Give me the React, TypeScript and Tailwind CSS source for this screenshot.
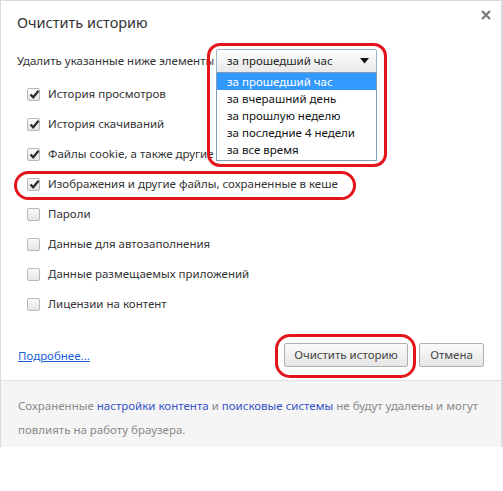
import React from "react";

const font = { fontFamily: '"Noto Sans", "Open Sans", sans-serif' };

function Check({ checked }: { checked: boolean }) {
  return (
    <div className="relative w-[13px] h-[13px] rounded-[2px] border border-[#b8b8b8] bg-gradient-to-b from-[#fbfbfb] to-[#e4e4e4] shrink-0">
      {checked && (
        <svg className="absolute left-[1px] top-[0px]" width="11" height="11" viewBox="0 0 11 11">
          <path d="M1.5 5.5 L4.2 8.3 L9.6 1.8" fill="none" stroke="#2a2a2a" strokeWidth="2.2" />
        </svg>
      )}
    </div>
  );
}

const rows: [string, boolean][] = [
  ["История просмотров", true],
  ["История скачиваний", true],
  ["Файлы cookie, а также другие данные сайтов и плагинов", true],
  ["Изображения и другие файлы, сохраненные в кеше", true],
  ["Пароли", false],
  ["Данные для автозаполнения", false],
  ["Данные размещаемых приложений", false],
  ["Лицензии на контент", false],
];

const options = [
  "за прошедший час",
  "за вчерашний день",
  "за прошлую неделю",
  "за последние 4 недели",
  "за все время",
];

export default function App() {
  return (
    <div className="relative w-[503px] h-[491px] bg-white overflow-hidden text-[#333]" style={font}>
      <div className="w-[503px] h-[447px] border-l border-r-2 border-t border-[#dadada] flex flex-col">
        <div className="h-[43px] flex items-center justify-between pl-[16px] pr-[10px]">
          <div className="text-[14.5px] text-[#333]">Очистить историю</div>
          <svg width="10" height="10" viewBox="0 0 10 10" className="mb-[16px]">
            <path d="M1 1 L9 9 M9 1 L1 9" stroke="#7a7a7a" strokeWidth="2.2" />
          </svg>
        </div>
        <div className="h-[35px] flex items-start pl-[16px] relative">
          <div className="text-[11.5px] mt-[8px] w-[199px] whitespace-nowrap">Удалить указанные ниже элементы</div>
          <div className="relative mt-[5px]">
            <div className="w-[161px] h-[24px] border border-[#9fb3cf] rounded-t-[2px] bg-gradient-to-b from-[#ffffff] to-[#e8e8e8] flex items-center pl-[10px] text-[11.5px] text-[#222]">
              за прошедший час
              <svg className="absolute right-[8px] top-[9px]" width="9" height="6" viewBox="0 0 9 6">
                <path d="M0 0 L9 0 L4.5 5.5 Z" fill="#111" />
              </svg>
            </div>
            <div className="absolute left-0 top-[23px] w-[161px] border border-[#7f9db9] bg-white z-10 pb-[2px]">
              {options.map((o, i) => (
                <div
                  key={o}
                  className={
                    "h-[17px] leading-[17px] pl-[10px] text-[11.5px] whitespace-nowrap " +
                    (i === 0 ? "bg-[#3399ff] text-white" : "text-[#111]")
                  }
                >
                  {o}
                </div>
              ))}
            </div>
          </div>
        </div>
        <div className="flex flex-col pl-[26px]">
          {rows.map(([label, c]) => (
            <div key={label} className="h-[30px] flex items-center gap-[8px]">
              <Check checked={c} />
              <span className="text-[11.5px] whitespace-nowrap text-[#333]">{label}</span>
            </div>
          ))}
        </div>
        <div className="h-[62px] flex items-start justify-between pt-[24px] pl-[17px] pr-[17px] border-b border-[#e2e2e2]">
          <a className="text-[11.5px] text-[#1a5fd8] underline mt-[4px]">Подробнее...</a>
          <div className="flex gap-[11px]">
            <button className="w-[124px] h-[24px] border border-[#b0b0b0] rounded-[2px] bg-gradient-to-b from-[#fafafa] to-[#e6e6e6] text-[11.5px] text-[#444]">
              Очистить историю
            </button>
            <button className="w-[65px] h-[24px] border border-[#b0b0b0] rounded-[2px] bg-gradient-to-b from-[#fafafa] to-[#e6e6e6] text-[11.5px] text-[#444]">
              Отмена
            </button>
          </div>
        </div>
        <div className="flex-1 bg-[#f5f5f5] pl-[17px] pr-[10px] pt-[13px] text-[11.5px] leading-[24px] text-[#8a8a8a]">
          <div className="whitespace-nowrap">
            Сохраненные <span className="text-[#3453c8]">настройки контента</span> и{" "}
            <span className="text-[#3453c8]">поисковые системы</span> не будут удалены и могут
          </div>
          <div className="whitespace-nowrap">повлиять на работу браузера.</div>
        </div>
      </div>

      <div className="absolute left-[207px] top-[43px] w-[180px] h-[124px] border-[3px] border-[#e3141c] rounded-[13px] z-20 pointer-events-none" />
      <div className="absolute left-[14px] top-[171px] w-[342px] h-[29px] border-[3px] border-[#e3141c] rounded-[15px] z-20 pointer-events-none" />
      <div className="absolute left-[275px] top-[334px] w-[141px] h-[44px] border-[3px] border-[#e3141c] rounded-[15px] z-20 pointer-events-none" />
    </div>
  );
}
